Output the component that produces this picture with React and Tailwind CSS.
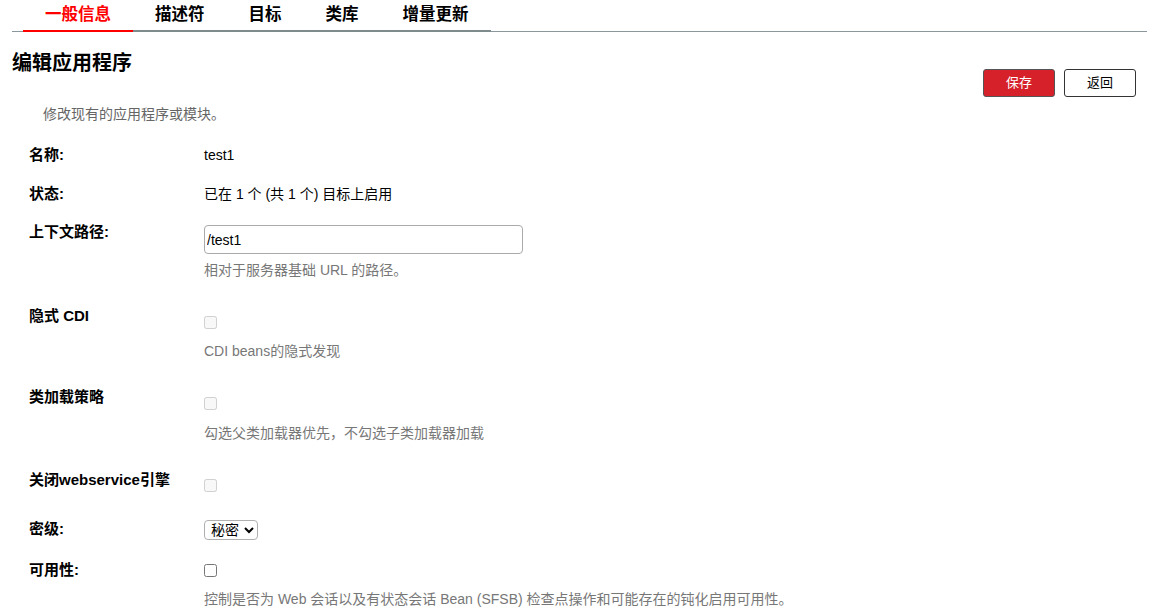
const tabs = ["一般信息", "描述符", "目标", "类库", "增量更新"];

function Row({ label, top, children }) {
  return (
    <div className="flex" style={{ marginTop: top }}>
      <div className="w-[175px] shrink-0 text-[15px] leading-[20px] font-bold text-black">{label}</div>
      <div className="flex flex-col items-start">{children}</div>
    </div>
  );
}

function Help({ children, mt = "mt-[13px]" }) {
  return <p className={`${mt} text-[14px] leading-[18px] text-[#777]`}>{children}</p>;
}

export default function App() {
  return (
    <div className="w-[1155px] h-[610px] overflow-hidden bg-white px-[12px] text-black" style={{ fontFamily: '"Liberation Sans", "Noto Sans CJK SC", sans-serif' }}>
      {/* tabs */}
      <div className="mr-[-4px] border-b border-[#8a979b]">
        <ul className="flex ml-[11px] -mb-px">
          {tabs.map((t, i) => (
            <li
              key={t}
              className={
                i === 0
                  ? "px-[22px] pt-[2px] pb-[4px] text-[16.5px] leading-[24px] font-bold text-[#ff0000] border-b-2 border-[#ff0000]"
                  : "px-[22px] pt-[2px] pb-[4px] text-[16.5px] leading-[24px] font-bold text-black border-b-2 border-[#7f8c8d]"
              }
            >
              {t}
            </li>
          ))}
        </ul>
      </div>

      {/* header */}
      <div className="flex justify-between">
        <h1 className="mt-[17px] text-[20px] leading-[28px] font-bold">编辑应用程序</h1>
        <div className="flex gap-[9px] mt-[37px] mr-[7px]">
          <button className="w-[72px] h-[28px] rounded-[3px] border border-[#555] bg-[#d6202a] text-white text-[13px]">保存</button>
          <button className="w-[72px] h-[28px] rounded-[3px] border border-[#333] bg-white text-black text-[13px]">返回</button>
        </div>
      </div>
      <p className="mt-[8px] ml-[31px] text-[14px] leading-[18px] text-[#666]">修改现有的应用程序或模块。</p>

      {/* form */}
      <div className="ml-[17px] flex flex-col">
        <Row label="名称:" top={22}>
          <span className="text-[14px] leading-[20px]">test1</span>
        </Row>
        <Row label="状态:" top={19}>
          <span className="text-[14px] leading-[20px]">已在 1 个 (共 1 个) 目标上启用</span>
        </Row>
        <Row label="上下文路径:" top={18}>
          <input
            defaultValue="/test1"
            className="mt-[3px] w-[319px] h-[29px] px-[2px] rounded-[4px] border border-[#aaa] text-[14px] outline-none"
          />
          <Help mt="mt-[7px]">相对于服务器基础 URL 的路径。</Help>
        </Row>
        <Row label="隐式 CDI" top={27}>
          <input type="checkbox" disabled className="mt-[10px] m-0 w-[13px] h-[13px]" />
          <Help>CDI beans的隐式发现</Help>
        </Row>
        <Row label="类加载策略" top={27}>
          <input type="checkbox" disabled className="mt-[10px] m-0 w-[13px] h-[13px]" />
          <Help mt="mt-[14px]">勾选父类加载器优先，不勾选子类加载器加载</Help>
        </Row>
        <Row label="关闭webservice引擎" top={28}>
          <input type="checkbox" disabled className="mt-[9px] m-0 w-[13px] h-[13px]" />
        </Row>
        <Row label="密级:" top={27}>
          <select className="mt-[1px] h-[20px] px-[2px] rounded-[4px] border border-[#b0b0b0] text-[14px] leading-none">
            <option>秘密</option>
          </select>
        </Row>
        <Row label="可用性:" top={20}>
          <input type="checkbox" className="mt-[4px] m-0 w-[13px] h-[13px]" />
          <Help>控制是否为 Web 会话以及有状态会话 Bean (SFSB) 检查点操作和可能存在的钝化启用可用性。</Help>
        </Row>
      </div>
    </div>
  );
}
